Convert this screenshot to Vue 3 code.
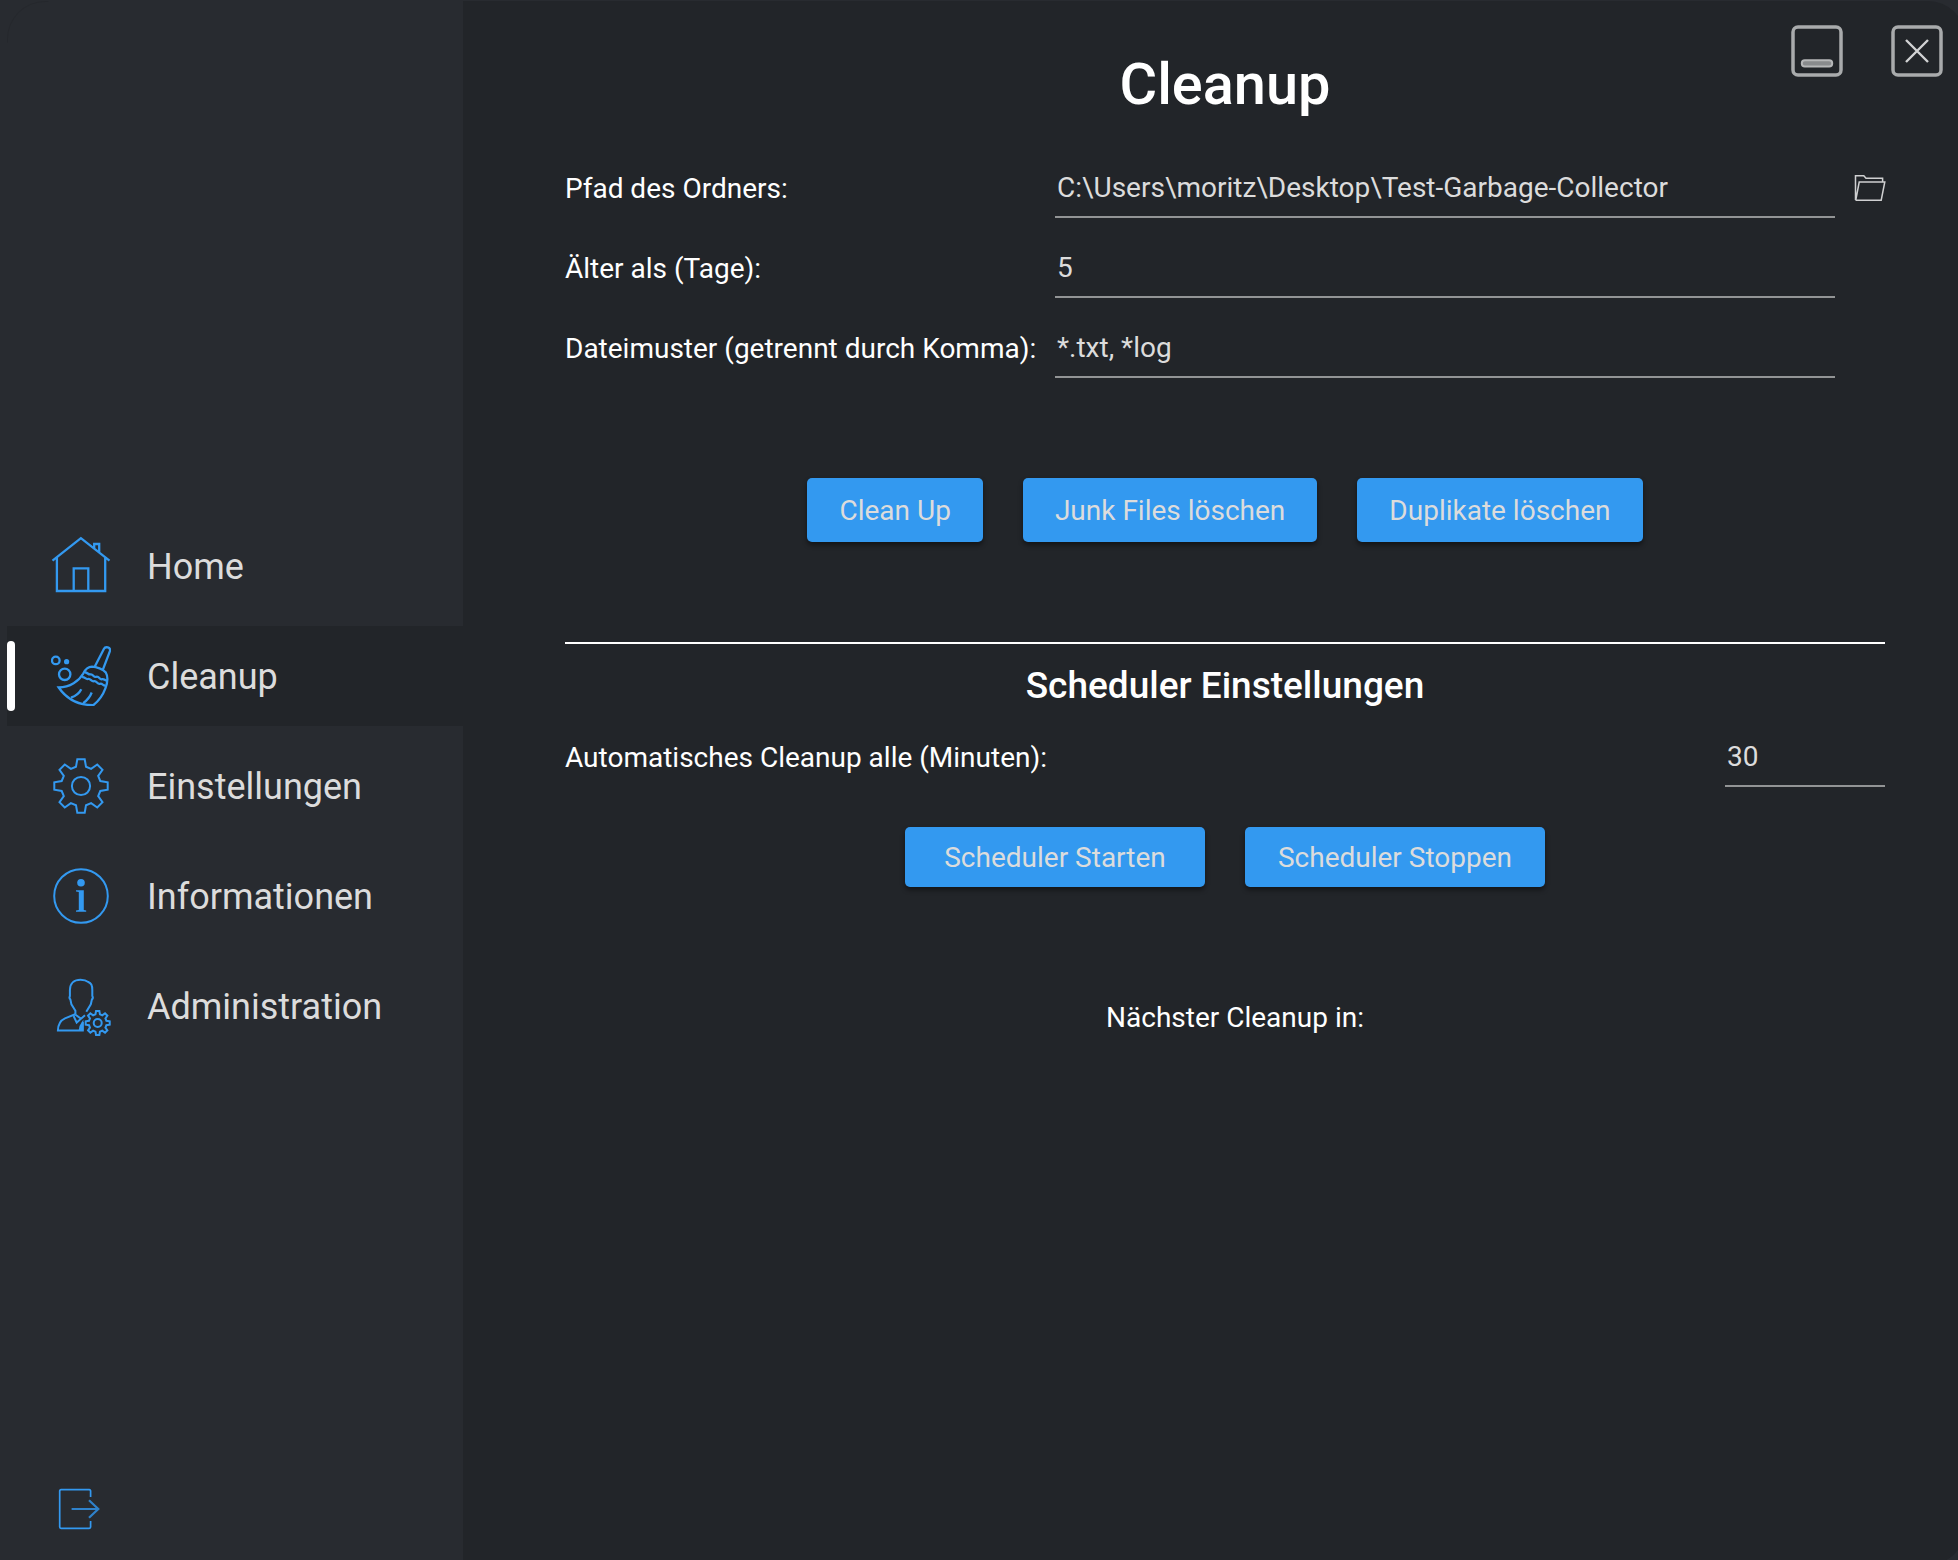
<script setup>
const navItems = [
  { id: 'home', label: 'Home' },
  { id: 'cleanup', label: 'Cleanup', active: true },
  { id: 'settings', label: 'Einstellungen' },
  { id: 'info', label: 'Informationen' },
  { id: 'admin', label: 'Administration' },
]

const fields = [
  { label: 'Pfad des Ordners:', value: 'C:\\Users\\moritz\\Desktop\\Test-Garbage-Collector', browse: true },
  { label: 'Älter als (Tage):', value: '5' },
  { label: 'Dateimuster (getrennt durch Komma):', value: '*.txt, *log' },
]

// Outline of an eight-toothed gear around (cx, cy)
function gear(cx, cy, s) {
  const tooth = [[-5, -19.3], [-3.7, -26.7], [3.7, -26.7], [5, -19.3]]
  let d = ''
  for (let i = 0; i < 8; i++) {
    const a = (i * Math.PI) / 4
    tooth.forEach(([x, y], j) => {
      const px = cx + s * (x * Math.cos(a) - y * Math.sin(a))
      const py = cy + s * (x * Math.sin(a) + y * Math.cos(a))
      d += `${i + j === 0 ? 'M' : 'L'}${px.toFixed(2)} ${py.toFixed(2)}`
    })
  }
  return d + 'Z'
}
const bigGear = gear(30, 30, 1)
const smallGear = gear(46.7, 47, 0.45)
</script>

<template>
  <div class="window">
    <aside class="sidebar">
      <nav class="nav">
        <a v-for="item in navItems" :key="item.id" class="nav-item" :class="{ active: item.active }">
          <span class="marker"></span>
          <svg class="icon" viewBox="0 0 60 60">
            <g v-if="item.id === 'home'">
              <path d="M1.5 24.7 29.9 2.2 58.5 24.7M5.9 21.5V55H54.2V21.5M22.7 55V32.3H37.3V55M43.2 12.5V8H48.2V16.4" />
            </g>
            <g v-else-if="item.id === 'cleanup'">
              <circle cx="4.8" cy="14.4" r="3.8" />
              <circle cx="15.6" cy="15.7" r="2.6" class="solid" />
              <circle cx="13.7" cy="28.3" r="5.7" />
              <path d="M43.7 20.7 53 2.8C54.3.2 59.8 1 59 5L51.6 24.3" />
              <path d="M7.7 41.5C19 41.4 28 35 32.3 27.5C34.5 22.8 37 20.6 41 20.6C45 20.8 52.5 23 54.8 26.5C59.2 34 53.5 50.5 42.3 59.2C28 59.2 16 53.5 7.7 41.5Z" />
              <path d="M34 26.5C36.5 26.2 37 28.8 39.5 28.4C42.3 27.8 42.5 31.8 45.3 30.8C48.2 30 48.5 34 51 33.2C53.3 32.6 54 34.8 56 34.5" />
              <path d="M31 31.2C34 30.6 34.5 33.7 37 33C39.8 32.2 40.3 36 43 35.2C45.8 34.5 46.3 38.8 49 37.8C51.3 37 52 39.8 54.3 39.5" />
              <path d="M30.3 43.3Q27.5 49 20 51.7M40.7 46.5Q38.5 52.5 32.2 57.2" />
            </g>
            <g v-else-if="item.id === 'settings'" class="thin">
              <path :d="bigGear" />
              <circle cx="30" cy="30" r="9.1" />
            </g>
            <g v-else-if="item.id === 'info'" class="thin">
              <circle cx="30" cy="30" r="26.8" />
              <circle cx="30" cy="16.7" r="3.8" class="solid" />
              <path d="M25 24.3H32.8V44L35.2 44.6V45.8H25V44.6L27.8 44V26L25 25.6Z" class="solid" />
            </g>
            <g v-else class="thin">
              <path d="M24.4 38.3V34.7L20.4 28.3 19.4 23.5C18.2 22.5 18.4 21 18.9 20V14C18.9 7 23.5 3.7 29.5 3.7C33.5 3.7 35.5 4.5 37.3 6C40.2 7 41.4 10 41.3 14V20C42 21 41.9 22.5 40.9 23.5L39.8 28.3 35.3 35.7" />
              <path d="M24.2 38.3 14 42.3C9 44.5 7 48.5 6.9 54.6H31.8V46" />
              <path d="M24.2 38.5 30 42.7 25.7 46.6 22.6 40M30 42.7 34 39.2" />
              <path d="M32.4 43.5 28.5 50 27.6 54.8H32.4Z" class="solid" />
              <path :d="smallGear" />
              <circle cx="46.7" cy="47" r="4" />
            </g>
          </svg>
          <span class="nav-label">{{ item.label }}</span>
        </a>
      </nav>
      <svg class="logout" viewBox="0 0 42 42">
        <path d="M32.6 9V3Q32.6 1.7 31.3 1.7H3Q1.7 1.7 1.7 3V39Q1.7 40.3 3 40.3H31.3Q32.6 40.3 32.6 39V33" />
        <path class="arrow" d="M13.6 21H40M31 12.2 40.3 21 31 29.8" />
      </svg>
    </aside>

    <main class="content">
      <div class="controls">
        <svg viewBox="0 0 52 52">
          <rect x="2" y="2" width="48" height="48" rx="5" />
          <rect x="10.8" y="35.3" width="30.4" height="6.2" rx="3" class="dash" />
        </svg>
        <svg viewBox="0 0 52 52">
          <rect x="2" y="2" width="48" height="48" rx="5" />
          <path d="M15 15 37 37M37 15 15 37" />
        </svg>
      </div>

      <h1>Cleanup</h1>

      <div class="form">
        <div v-for="f in fields" :key="f.label" class="row">
          <label>{{ f.label }}</label>
          <div class="input">{{ f.value }}</div>
          <svg v-if="f.browse" class="folder" viewBox="0 0 32 28">
            <path d="M1.5 26V1.7H9.8L12 4.2H28.6V7.5M1.5 26.2H27.2L30.8 8H5.2L1.8 26" />
          </svg>
        </div>
      </div>

      <div class="buttons">
        <button>Clean Up</button>
        <button>Junk Files löschen</button>
        <button>Duplikate löschen</button>
      </div>

      <section class="scheduler">
        <h2>Scheduler Einstellungen</h2>
        <div class="interval">
          <label>Automatisches Cleanup alle (Minuten):</label>
          <div class="input">30</div>
        </div>
        <div class="buttons compact">
          <button>Scheduler Starten</button>
          <button>Scheduler Stoppen</button>
        </div>
        <p class="next">Nächster Cleanup in:</p>
      </section>
    </main>
  </div>
</template>

<style>
body {
  background: #282b30;
}
</style>

<style scoped>
* {
  box-sizing: border-box;
}
.window {
  position: relative;
  display: flex;
  width: 1958px;
  height: 1560px;
  overflow: hidden;
  background: #282b30;
  color: #fff;
  font-family: Roboto, sans-serif;
  font-size: 28px;
}
/* faint edge of the rounded window corner */
.window::before {
  content: '';
  position: absolute;
  top: 1px;
  left: 7px;
  width: 40px;
  height: 40px;
  border: 1px solid transparent;
  border-top-color: rgba(0, 0, 0, 0.08);
  border-left-color: rgba(0, 0, 0, 0.08);
  border-radius: 38px 0 0 0;
}
.sidebar {
  display: flex;
  flex: none;
  flex-direction: column;
  justify-content: space-between;
  width: 463px;
  padding: 516px 0 30px 7px;
}
.nav {
  display: flex;
  flex-direction: column;
  gap: 10px;
}
.nav-item {
  display: flex;
  align-items: center;
  height: 100px;
  color: #dcdcdc;
  font-size: 36px;
}
.nav-item.active {
  background: #222529;
}
.nav-label {
  padding-top: 1px;
}
.marker {
  width: 8px;
  height: 70px;
  border-radius: 4px;
}
.active .marker {
  background: #fff;
}
.icon {
  width: 60px;
  height: 60px;
  margin: 0 36px;
}
svg {
  fill: none;
  stroke: #3399f0;
  stroke-width: 2.3;
  flex: none;
}
.icon .thin {
  stroke-width: 2;
}
.icon .solid {
  fill: #3399f0;
  stroke: none;
}
.logout {
  width: 42px;
  height: 42px;
  margin-left: 51px;
  stroke-width: 1.7;
}
.logout .arrow {
  stroke-width: 2.2;
  stroke: #2f82cb;
}
.content {
  position: relative;
  flex: none;
  width: 1502px;
  height: 1564px;
  margin-top: 1px;
  padding: 0 80px 0 102px;
  border-radius: 0 37px 37px 0;
  background: #222529;
}
.controls {
  position: absolute;
  top: 24px;
  right: 22px;
  display: flex;
  gap: 48px;
}
.controls svg {
  width: 52px;
  height: 52px;
  stroke: #a9abac;
  stroke-width: 3.5;
}
.controls path {
  stroke: #d2d3d4;
  stroke-width: 2.4;
}
.controls .dash {
  fill: #898b8d;
  stroke: #b6b7b8;
  stroke-width: 2;
}
h1 {
  margin: 0;
  padding-top: 50px;
  font-size: 57.7px;
  font-weight: 500;
  line-height: 66px;
  text-align: center;
}
.form {
  display: flex;
  flex-direction: column;
  gap: 20px;
  margin-top: 41px;
}
.row {
  display: flex;
  align-items: center;
  height: 60px;
}
.row label {
  width: 490px;
}
.input {
  width: 780px;
  height: 60px;
  padding: 0 2px;
  border-bottom: 2px solid #929495;
  color: #dcdcdc;
  line-height: 59px;
}
.folder {
  width: 32px;
  height: 28px;
  margin-left: 19px;
  margin-right: -2px;
  stroke: #cfd0d1;
  stroke-width: 1.5;
}
.buttons {
  display: flex;
  justify-content: center;
  gap: 40px;
  margin-top: 100px;
}
button {
  height: 64px;
  padding: 0 32px;
  border: 0;
  border-radius: 5px;
  background: #3399f0;
  box-shadow: 0 3px 5px rgba(0, 0, 0, 0.45);
  color: #dcdcdc;
  font: inherit;
}
.scheduler {
  margin-top: 100px;
  border-top: 2px solid #fff;
}
h2 {
  margin: 20px 0 0;
  font-size: 37px;
  font-weight: 500;
  line-height: 43px;
  text-align: center;
}
.interval {
  display: flex;
  align-items: center;
  justify-content: space-between;
  margin-top: 20px;
}
.interval .input {
  width: 160px;
}
.compact {
  margin-top: 40px;
}
.compact button {
  width: 300px;
  height: 60px;
}
.next {
  margin: 114px 0 0;
  padding-left: 20px;
  line-height: 34px;
  text-align: center;
}
</style>
